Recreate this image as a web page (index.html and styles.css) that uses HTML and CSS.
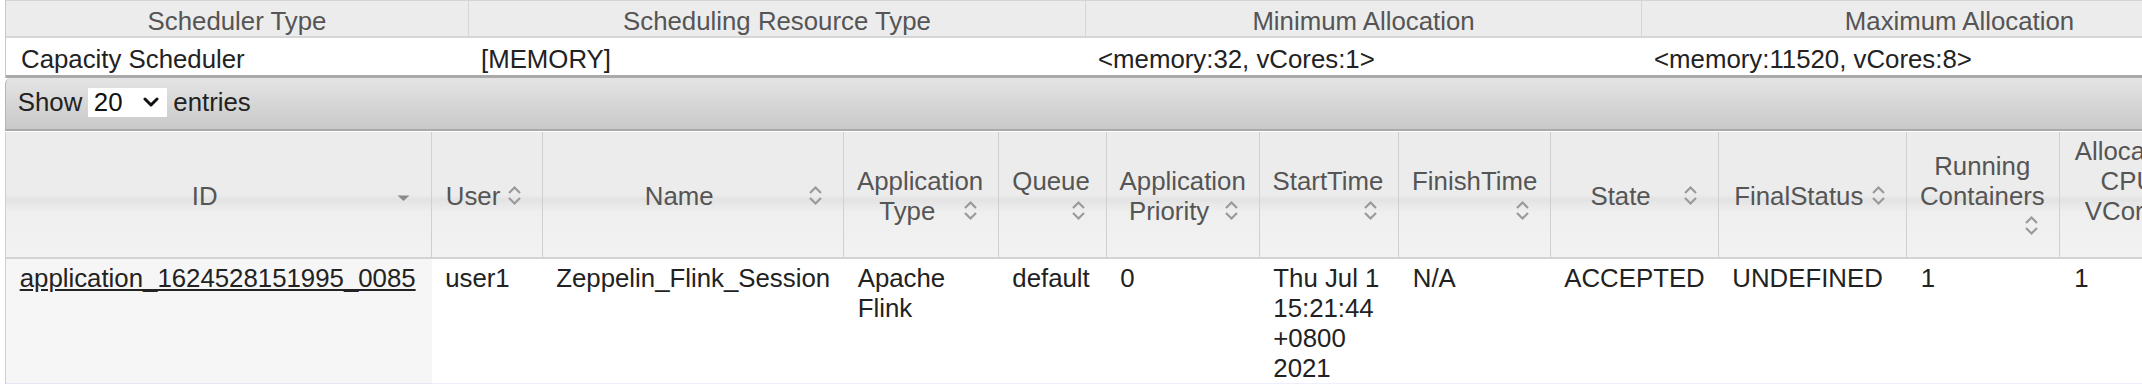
FILE: index.html
```html
<!DOCTYPE html>
<html>
<head>
<meta charset="utf-8">
<title>Applications</title>
<link rel="stylesheet" href="styles.css">
</head>
<body>
<div class="page">
  <table class="info">
    <colgroup><col class="c1"><col class="c2"><col class="c3"><col class="c4"></colgroup>
    <thead>
      <tr><th>Scheduler Type</th><th>Scheduling Resource Type</th><th>Minimum Allocation</th><th>Maximum Allocation</th></tr>
    </thead>
    <tbody>
      <tr><td class="first">Capacity Scheduler</td><td>[MEMORY]</td><td>&lt;memory:32, vCores:1&gt;</td><td>&lt;memory:11520, vCores:8&gt;</td></tr>
    </tbody>
  </table>
  <div class="toolbar">
    <span>Show</span>
    <span class="select">20<svg class="chev" viewBox="0 0 16 10" width="16" height="10"><path d="M2 2 L8 8 L14 2" fill="none" stroke="#111" stroke-width="3" stroke-linecap="round" stroke-linejoin="round"/></svg></span>
    <span>entries</span>
  </div>
  <table class="apps">
    <colgroup>
      <col class="w-id"><col class="w-user"><col class="w-name"><col class="w-type"><col class="w-queue"><col class="w-prio"><col class="w-start"><col class="w-finish"><col class="w-state"><col class="w-final"><col class="w-run"><col class="w-cpu"><col class="w-mem">
    </colgroup>
    <thead>
      <tr>
        <th>ID<span class="si"><svg viewBox="0 0 25 30" width="25" height="30"><path d="M6.5 14.5 L18.5 14.5 L12.5 20 Z" fill="#8a8a8a"/></svg></span></th>
        <th>User<span class="si"><svg viewBox="0 0 25 30" width="25" height="30"><path d="M7 12 L12.5 6.5 L18 12 M7 17 L12.5 22.5 L18 17" fill="none" stroke="#9a9a9a" stroke-width="2.2"/></svg></span></th>
        <th>Name<span class="si"><svg viewBox="0 0 25 30" width="25" height="30"><path d="M7 12 L12.5 6.5 L18 12 M7 17 L12.5 22.5 L18 17" fill="none" stroke="#9a9a9a" stroke-width="2.2"/></svg></span></th>
        <th>Application Type<span class="si"><svg viewBox="0 0 25 30" width="25" height="30"><path d="M7 12 L12.5 6.5 L18 12 M7 17 L12.5 22.5 L18 17" fill="none" stroke="#9a9a9a" stroke-width="2.2"/></svg></span></th>
        <th>Queue<span class="si"><svg viewBox="0 0 25 30" width="25" height="30"><path d="M7 12 L12.5 6.5 L18 12 M7 17 L12.5 22.5 L18 17" fill="none" stroke="#9a9a9a" stroke-width="2.2"/></svg></span></th>
        <th>Application Priority<span class="si"><svg viewBox="0 0 25 30" width="25" height="30"><path d="M7 12 L12.5 6.5 L18 12 M7 17 L12.5 22.5 L18 17" fill="none" stroke="#9a9a9a" stroke-width="2.2"/></svg></span></th>
        <th>StartTime<span class="si"><svg viewBox="0 0 25 30" width="25" height="30"><path d="M7 12 L12.5 6.5 L18 12 M7 17 L12.5 22.5 L18 17" fill="none" stroke="#9a9a9a" stroke-width="2.2"/></svg></span></th>
        <th>FinishTime<span class="si"><svg viewBox="0 0 25 30" width="25" height="30"><path d="M7 12 L12.5 6.5 L18 12 M7 17 L12.5 22.5 L18 17" fill="none" stroke="#9a9a9a" stroke-width="2.2"/></svg></span></th>
        <th>State<span class="si"><svg viewBox="0 0 25 30" width="25" height="30"><path d="M7 12 L12.5 6.5 L18 12 M7 17 L12.5 22.5 L18 17" fill="none" stroke="#9a9a9a" stroke-width="2.2"/></svg></span></th>
        <th>FinalStatus<span class="si"><svg viewBox="0 0 25 30" width="25" height="30"><path d="M7 12 L12.5 6.5 L18 12 M7 17 L12.5 22.5 L18 17" fill="none" stroke="#9a9a9a" stroke-width="2.2"/></svg></span></th>
        <th>Running Containers<span class="si"><svg viewBox="0 0 25 30" width="25" height="30"><path d="M7 12 L12.5 6.5 L18 12 M7 17 L12.5 22.5 L18 17" fill="none" stroke="#9a9a9a" stroke-width="2.2"/></svg></span></th>
        <th>Allocated CPU VCores<span class="si"><svg viewBox="0 0 25 30" width="25" height="30"><path d="M7 12 L12.5 6.5 L18 12 M7 17 L12.5 22.5 L18 17" fill="none" stroke="#9a9a9a" stroke-width="2.2"/></svg></span></th>
        <th>Allocated Memory MB<span class="si"><svg viewBox="0 0 25 30" width="25" height="30"><path d="M7 12 L12.5 6.5 L18 12 M7 17 L12.5 22.5 L18 17" fill="none" stroke="#9a9a9a" stroke-width="2.2"/></svg></span></th>
      </tr>
    </thead>
    <tbody>
      <tr>
        <td class="sorted"><a href="#">application_1624528151995_0085</a></td>
        <td>user1</td>
        <td>Zeppelin_Flink_Session</td>
        <td>Apache Flink</td>
        <td>default</td>
        <td>0</td>
        <td>Thu Jul 1 15:21:44 +0800 2021</td>
        <td>N/A</td>
        <td>ACCEPTED</td>
        <td>UNDEFINED</td>
        <td>1</td>
        <td>1</td>
        <td>2048</td>
      </tr>
      <tr class="odd">
        <td class="sorted">&nbsp;</td><td></td><td></td><td></td><td></td><td></td><td></td><td></td><td></td><td></td><td></td><td></td><td></td>
      </tr>
    </tbody>
  </table>
</div>
</body>
</html>
```

FILE: styles.css
```css
html, body {
  margin: 0;
  padding: 0;
  overflow: hidden;
  background: #ffffff;
}

body {
  width: 2142px;
  height: 384px;
  font-family: "Liberation Sans", Arial, Helvetica, sans-serif;
  font-size: 25.8px;
  line-height: 30px;
  color: #222222;
}

.page {
  width: 2400px;
  padding-left: 5px;
}

table {
  border-collapse: separate;
  border-spacing: 0;
  table-layout: fixed;
}

/* scheduler info table */
.info {
  width: 2272px;
  border-left: 1px solid #c9c9c9;
}

.info .c1 { width: 463px; }
.info .c2 { width: 617px; }
.info .c3 { width: 556px; }
.info .c4 { width: 636px; }

.info th {
  height: 29px;
  padding: 5px 0 0 0;
  font-weight: normal;
  color: #555555;
  text-align: center;
  vertical-align: top;
  background: #ececec;
  border-top: 1px solid #d4d4d4;
  border-bottom: 2px solid #d6d6d6;
  border-right: 1px solid #d6d6d6;
}

.info td {
  height: 31px;
  padding: 6px 13.7px 0 12px;
  text-align: left;
  vertical-align: top;
  background: #ffffff;
  border-bottom: 3px solid #a9a9a9;
}

.info td.first {
  padding-left: 15px;
}

/* show entries toolbar */
.toolbar {
  display: flex;
  align-items: center;
  gap: 5.5px;
  height: 48px;
  padding: 0 0 3px 11.8px;
  border-left: 1px solid #b4b4b4;
  border-bottom: 2px solid #a9a9a9;
  border-top-left-radius: 6px;
  background: linear-gradient(#e4e4e4, #c9c9c9);
  color: #222222;
}

.select {
  display: flex;
  align-items: center;
  justify-content: space-between;
  width: 65px;
  height: 29px;
  padding: 0 8px 0 6px;
  margin-right: 1px;
  background: #ffffff;
  color: #111111;
}

.chev {
  display: block;
}

/* applications table */
.apps {
  width: 2367px;
  margin-top: 1px;
  border-left: 1px solid #cfcfcf;
}

.w-id { width: 425.5px; }
.w-user { width: 111px; }
.w-name { width: 301.5px; }
.w-type { width: 154.6px; }
.w-queue { width: 108px; }
.w-prio { width: 153px; }
.w-start { width: 139.5px; }
.w-finish { width: 151.5px; }
.w-state { width: 168px; }
.w-final { width: 188.4px; }
.w-run { width: 153.5px; }
.w-cpu { width: 137.7px; }
.w-mem { width: 175px; }

.apps th {
  padding: 4px 15px 1px 13px;
  font-weight: normal;
  color: #555555;
  text-align: center;
  vertical-align: middle;
  background: linear-gradient(#ececec 0, #ececec 50%, #e3e3e3 54%, #efefef 64%, #f2f2f2 100%);
  border-right: 1px solid #d0d0d0;
  border-bottom: 2px solid #d3d3d3;
}

.si {
  float: right;
  width: 25px;
  height: 30px;
}

.si svg {
  display: block;
}

.apps td {
  padding: 4px 13.7px 0 13.7px;
  vertical-align: top;
  text-align: left;
  background: #ffffff;
  color: #222222;
}

.apps td.sorted {
  background: #f6f6f6;
}

.apps td a {
  color: #222222;
  text-decoration: underline;
}

.apps tr.odd td {
  background: #eeeefc;
}

.apps tr.odd td.sorted {
  background: #e6e6f6;
}
```
